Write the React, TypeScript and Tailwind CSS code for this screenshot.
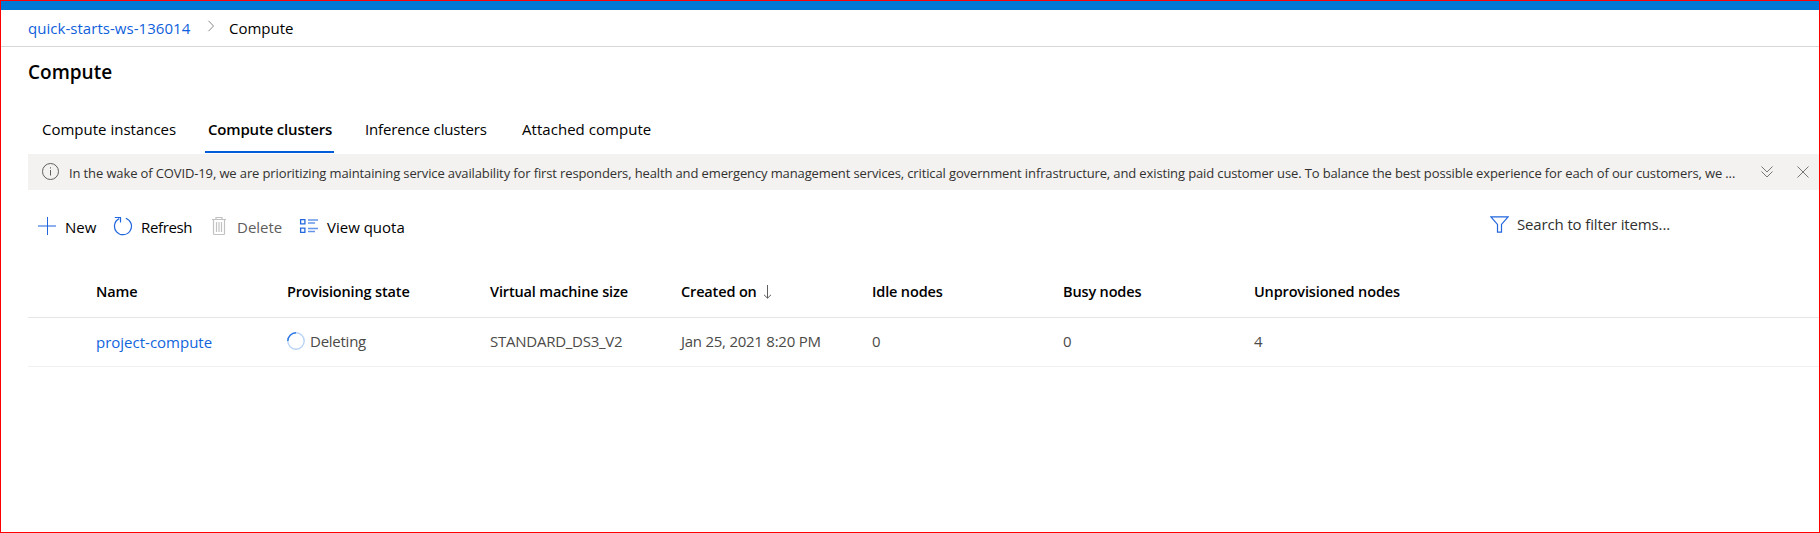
import type { ReactNode } from "react";

const BLUE = "#2266dd";

function Tab({ label, active, className }: { label: string; active?: boolean; className: string }) {
  return (
    <div className={`flex h-[46px] shrink-0 flex-col whitespace-nowrap ${className}`}>
      <span className={`flex h-11 items-center pl-[2px] ${active ? "pl-[3px] font-semibold tracking-[-0.19px]" : ""}`}>{label}</span>
      {active && <span className="h-[2px] bg-[#015cda]" />}
    </div>
  );
}

function Tool({ icon, label, className }: { icon: ReactNode; label: string; className: string }) {
  return (
    <button className={`flex shrink-0 items-center whitespace-nowrap ${className}`}>
      {icon}
      <span>{label}</span>
    </button>
  );
}

const PlusIcon = () => (
  <svg width="20" height="20" viewBox="0 0 20 20" className="mb-[2px] shrink-0" fill="none" stroke={BLUE}>
    <path d="M10.5 1V19" />
    <path d="M1 10H19" strokeWidth="1.6" opacity="0.65" />
  </svg>
);

const RefreshIcon = () => (
  <svg width="20" height="20" viewBox="0 0 20 20" className="mb-[2px] shrink-0" fill="none" stroke={BLUE} strokeWidth="1.2">
    <path d="M12.8 2.2A8.5 8.5 0 1 1 6.2 2.6" />
    <path d="M1.8 1.5H7.5V6.6" />
  </svg>
);

const TrashIcon = () => (
  <svg width="16" height="20" viewBox="0 0 16 20" className="mb-[2px] shrink-0" fill="none" stroke="#c4c2c0" strokeWidth="1.2">
    <path d="M1 3.5H15M5 3.5V1.5H11V3.5M2.5 3.5V17.5Q2.5 18.5 3.5 18.5H12.5Q13.5 18.5 13.5 17.5V3.5M5.5 6V16M8 6V16M10.5 6V16" />
  </svg>
);

const QuotaIcon = () => (
  <svg width="20" height="16" viewBox="0 0 20 16" className="mb-[2px] shrink-0" fill="none" stroke="#2568dd">
    <path d="M1.6 1.6H5.9V5.9H1.6ZM1.6 10.1H5.9V14.4H1.6Z" strokeWidth="1.3" />
    <path d="M9 2H19M9 5H16M9 10.5H19M9 13.5H16" strokeWidth="1.6" opacity="0.7" />
  </svg>
);

const columns = ["Name", "Provisioning state", "Virtual machine size", "Created on", "Idle nodes", "Busy nodes", "Unprovisioned nodes"];
const GRID = "grid grid-cols-[191px_203px_191px_191px_191px_191px_1fr] items-center pl-[68px] whitespace-nowrap";

export default function App() {
  return (
    <div className="flex h-[533px] w-[1820px] flex-col overflow-hidden border border-[#ff0000] bg-white font-['Open_Sans','Noto_Sans',sans-serif] text-[15px] leading-5 text-black">
      <div className="h-[9px] shrink-0 bg-[#0078d4]" />
      <nav className="flex h-[37px] shrink-0 items-center border-b border-[#d6d6d6] pl-[27px]">
        <a className="w-[179px] tracking-[0.04px] text-[#0f5fdc]">quick-starts-ws-136014</a>
        <svg width="8" height="12" viewBox="0 0 8 12" className="mr-[14px] mb-[4px]" fill="none" stroke="#8a8886">
          <path d="M1.5 0.8L6.5 6L1.5 11.2" />
        </svg>
        <span>Compute</span>
      </nav>
      <h1 className="flex h-[49px] shrink-0 items-center pl-[27px] text-[19px] font-semibold">Compute</h1>
      <div className="mt-[11px] mb-px flex shrink-0 pl-[39px]">
        <Tab label="Compute instances" className="w-[165px]" />
        <Tab label="Compute clusters" active className="mr-[29px] w-[129px]" />
        <Tab label="Inference clusters" className="w-[157px] tracking-[-0.15px]" />
        <Tab label="Attached compute" className="w-[140px] tracking-[0.04px]" />
      </div>
      <div className="ml-[27px] flex h-9 shrink-0 items-center bg-[#f3f2f1] pl-[14px] text-[13px] text-[#323130]">
        <svg width="17" height="17" viewBox="0 0 17 17" className="mr-[10px] mb-px shrink-0" fill="none" stroke="#605e5c">
          <circle cx="8.5" cy="8.5" r="8" />
          <path d="M8.5 7V12.5M8.5 4.3V5.5" />
        </svg>
        <p className="w-[1692px] shrink-0 pt-px tracking-[-0.125px] whitespace-nowrap">
          In the wake of COVID-19, we are prioritizing maintaining service availability for first responders, health and emergency management services, critical government infrastructure, and existing paid customer use. To balance the best possible experience for each of our customers, we ...
        </p>
        <svg width="12" height="12" viewBox="0 0 12 12" className="mr-6 mb-px shrink-0" fill="none" stroke="#797775">
          <path d="M0.5 0.5L6 6L11.5 0.5M0.5 5.5L6 11L11.5 5.5" />
        </svg>
        <svg width="12" height="12" viewBox="0 0 12 12" className="mb-px shrink-0" fill="none" stroke="#797775">
          <path d="M0.5 0.5L11.5 11.5M11.5 0.5L0.5 11.5" />
        </svg>
      </div>
      <div className="flex h-[74px] shrink-0 items-center pl-[36px]">
        <Tool icon={<PlusIcon />} label="New" className="w-[76px] gap-[8px]" />
        <Tool icon={<RefreshIcon />} label="Refresh" className="w-[98px] gap-[8px] tracking-[-0.35px]" />
        <Tool icon={<TrashIcon />} label="Delete" className="w-[88px] gap-[10px] text-[#605e5c]" />
        <Tool icon={<QuotaIcon />} label="View quota" className="w-[1191px] gap-[8px]" />
        <div className="flex items-center pb-[6px] whitespace-nowrap text-[#323130]">
          <svg width="19" height="17" viewBox="0 0 19 17" className="mr-[8px]" fill="none" stroke={BLUE} strokeWidth="1.2">
            <path d="M0.9 0.8H18.1L11.5 8.4V16.2H7.5V8.4Z" />
          </svg>
          <span className="tracking-[-0.14px]">Search to filter items...</span>
        </div>
      </div>
      <div className={`ml-[27px] h-[54px] shrink-0 border-b border-[#e6e6e6] pt-[3px] text-[14.5px] font-semibold tracking-[-0.15px] ${GRID}`}>
        {columns.map((c) => (
          <div key={c} className="flex items-center">
            {c}
            {c === "Created on" && (
              <svg width="8" height="14" viewBox="0 0 8 14" className="ml-[6px]" fill="none" stroke="#605e5c">
                <path d="M4.5 0V13M1 9.8L4.5 13.2L8 9.8" />
              </svg>
            )}
          </div>
        ))}
      </div>
      <div className={`ml-[27px] h-[49px] shrink-0 border-b border-[#f0f0f0] pb-[2px] tracking-[-0.25px] text-[#4b4a48] ${GRID}`}>
        <a className="pt-[2px] tracking-normal text-[#1065dc]">project-compute</a>
        <div className="flex items-center">
          <svg width="18" height="18" viewBox="0 0 18 18" className="mr-[5px]" fill="none" strokeWidth="1.4">
            <circle cx="9" cy="9" r="8.2" stroke="#b8d3f6" />
            <path d="M0.8 9A8.2 8.2 0 0 1 9 0.8" stroke="#2d78e2" />
          </svg>
          Deleting
        </div>
        <div>STANDARD_DS3_V2</div>
        <div>Jan 25, 2021 8:20 PM</div>
        <div>0</div>
        <div>0</div>
        <div>4</div>
      </div>
    </div>
  );
}
